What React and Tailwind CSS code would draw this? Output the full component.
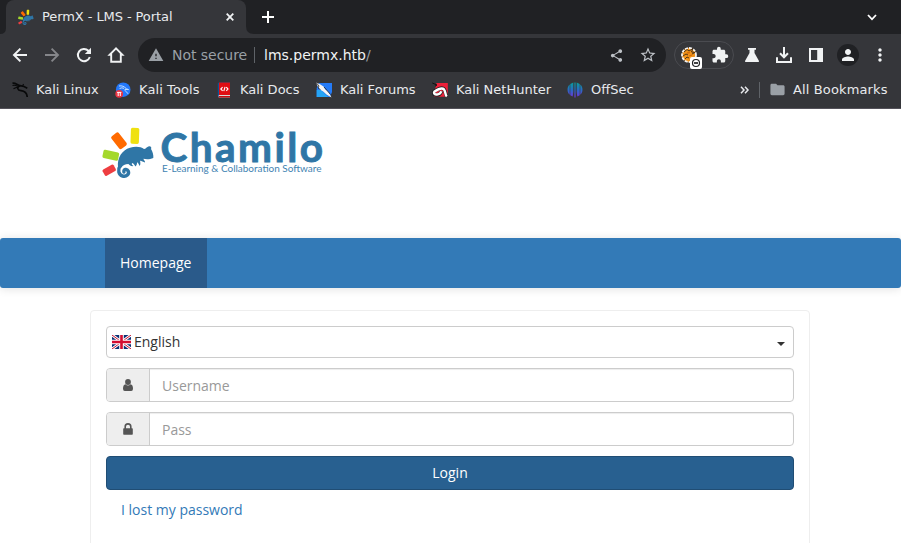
import React from "react";
import {
  MdWarning, MdShare, MdStarBorder, MdExtension, MdPerson, MdMoreVert, MdFolder,
} from "react-icons/md";

function Rays() {
  return (
    <>
      <rect x="-4.2" y="-8" width="8.4" height="16" rx="1.6" fill="#efe110" transform="translate(39.9 15.8) rotate(2)" />
      <rect x="-4.6" y="-8" width="9.2" height="16" rx="1.8" fill="#ff6a00" transform="translate(24 20.8) rotate(-38)" />
      <rect x="-4.2" y="-8" width="8.4" height="16" rx="1.6" fill="#a4d82c" transform="translate(15.8 35.2) rotate(-78)" />
      <rect x="-3.6" y="-6.3" width="7.2" height="12.6" rx="1.5" fill="#ee3e41" transform="translate(14.2 50.2) rotate(61)" />
    </>
  );
}

function Chameleon() {
  return (
    <>
      <path
        fill="#2f76a6"
        d="M23 47 C22 38 27 30 35 27.8 C40 26 46 26.5 49 29 C51 29 51.5 27 54 26.3 C55.5 26 57 27.3 56 29 C57.5 31.5 58.7 35 58.3 38 C55 39.5 51 39.5 48.5 38.8 C48.4 40 50.5 41 50 42.5 C48.4 42 46.5 40.9 45 40.7 C45.3 41.7 45.8 44 44.8 46 C43.8 44.6 43.5 43.1 42.2 42.2 C41.8 43.4 42.2 45 40.5 46.4 C39.2 44.8 38.8 43.5 37.2 43 C36.2 43.8 37 45 38.5 46 C36.5 46.6 34.6 45.4 33.4 44 C30 44 27.6 45.2 26.5 47.5 Z"
      />
      <path
        d="M25 46 C22.5 49.5 23.5 55 27.5 56 C31.5 57.2 34.6 54 33.2 51 C32 48.5 28.3 49.2 28.9 52"
        fill="none" stroke="#2f76a6" strokeWidth="3.4" strokeLinecap="round"
      />
    </>
  );
}

function ChamiloLogo() {
  return (
    <svg width="240" height="75" viewBox="0 0 240 75" className="block overflow-visible" role="img" aria-label="Chamilo">
      <Rays />
      <Chameleon />
      <text x="65.5" y="41.5" fontFamily="Lato, sans-serif" fontWeight="700" fontSize="40.5" fill="#2f76a6" stroke="#2f76a6" strokeWidth="0.9" textLength="162.5" lengthAdjust="spacing">Chamilo</text>
      <text x="67" y="52.3" fontFamily="Lato, sans-serif" fontSize="10.4" fill="#3f83b2" textLength="159.5" lengthAdjust="spacingAndGlyphs">E-Learning &amp; Collaboration Software</text>
    </svg>
  );
}

function LinuxIcon() {
  return (
    <svg width="16" height="16" viewBox="0 0 16 16" stroke="#08090a" fill="none">
      <path d="M.5 1.2 C4 1 5.5 3.2 8 3.6 L12 4.5 L15.3 6.3 M8 4 C4.3 5 5.5 8.4 9 8.7 C13 9.2 15 11.3 15.2 15" strokeWidth="1.7" />
      <path d="M.5 3.5 C3.7 2.7 5 4 7 4.5 M1.5 6.8 L5.4 5 M10.7 4 L11.5 2" strokeWidth="1.1" />
    </svg>
  );
}

function ToolsIcon() {
  return (
    <svg width="16" height="16" viewBox="0 0 16 16">
      <circle cx="8.2" cy="7.7" r="7.3" fill="#2479fb" />
      <path d="M4 4 C7 3.4 9 4.4 11.5 6.8 L13.6 7.6 L10 7.4 C8.6 8.5 11.8 9.3 13 11.8 M4.6 6.5 Q7 5.2 9 6.4" stroke="#c5e0ff" strokeWidth="1" fill="none" />
      <circle cx="4.2" cy="11.8" r="3.9" fill="#e93442" />
      <path d="M2.1 10.4 H6.4 M3.2 10.5 V14 M5.3 10.5 V14" stroke="#fff" strokeWidth="1" />
    </svg>
  );
}

function DocsIcon() {
  return (
    <svg width="16" height="16" viewBox="0 0 16 16">
      <path d="M1.8 1.2 L3 .4 H14 V13 L3 15.5 L1.8 14.5Z" fill="#0b5396" />
      <path d="M3 .5 H14 V13.2 H3Z" fill="#e00d13" />
      <path d="M2.7 13 H14 V15.5 H2.7Z" fill="#d9d9d9" />
      <path d="M3 14 H14 V15.5 H2.5Z" fill="#c50d12" />
      <path d="M6.6 5.2 L4.8 7 L6.6 8.8 M10.3 5.2 L12 7 L10.3 8.8 M9.1 4.8 L7.8 9.2" stroke="#fff" strokeWidth="1.1" fill="none" />
    </svg>
  );
}

function ForumsIcon() {
  return (
    <svg width="16" height="16" viewBox="0 0 16 16">
      <path d="M3 1 H16 V10 L14 15 H.7 V6Z" fill="#247bf8" />
      <path d="M.7 8 L5 8 L12 15 H.7Z" fill="#25a4f5" />
      <path d="M0 .6 L4 2.3 L7.5 4.6 L9.4 7.6 L12.5 10 L15.5 15.6 L10.5 12.4 L7.2 9.6 L3.5 7.3 L1.2 3.2Z" fill="#f5f5f5" />
      <path d="M0 .5 L3 4 L2 6 L4.5 7.6 M8 5 L11 8.4 L14.5 12.5" stroke="#202124" strokeWidth=".8" fill="none" />
    </svg>
  );
}

function NetHunterIcon() {
  return (
    <svg width="16" height="16" viewBox="0 0 16 16">
      <path d="M4.5 1 H15.8 V10 L14.6 14.8 H2 L3.5 5Z" fill="#ed2039" />
      <path d="M14.6 14 C13 12.6 14.1 9.7 12.2 7.3 C10 4.8 6.4 6.8 2.2 9.2 C.6 11.6 2.6 13.6 5.7 12.9 C7.8 12.4 9 11 9.2 9.3" stroke="#202124" strokeWidth="3.6" fill="none" />
      <path d="M14.8 14.4 C12.8 12.8 13.9 9.7 12 7.4 C9.6 5 6 7.2 2.6 9.4 C1.2 11.4 2.8 13 5.7 12.4 C7.8 12 8.8 10.8 9.2 9.3" stroke="#fff" strokeWidth="2.4" fill="none" />
      <path d="M.3 1 L5 3 L3 4.2" stroke="#111" strokeWidth="1" fill="none" />
    </svg>
  );
}

function OffSecIcon() {
  return (
    <svg width="16" height="16" viewBox="0 0 16 16">
      <defs>
        <linearGradient id="offsec" x1="0" y1="0" x2="0" y2="1">
          <stop offset="0" stopColor="#079e9b" />
          <stop offset=".5" stopColor="#286ac4" />
          <stop offset="1" stopColor="#7332dc" />
        </linearGradient>
      </defs>
      <path d="M2.7 2.6 V12.7 C-.2 10.3 -.2 5 2.7 2.6Z M3.3 2 L6.3 .6 V10 Q6 13 5.6 14.4 L3.3 13.2Z M7.4 .5 H8.6 V15.5 H7.4Z M9.7 .6 L12.7 2 V13.2 L10.4 14.4 Q10 13 9.7 10Z M13.3 2.6 C16.2 5 16.2 10.3 13.3 12.7Z" fill="url(#offsec)" />
    </svg>
  );
}

function FoxyIcon() {
  return (
    <span className="relative block size-4">
      <svg width="16" height="16" viewBox="0 0 16 16">
        <circle cx="8" cy="8" r="7.2" fill="#f1931b" />
        <circle cx="8" cy="8" r="7" fill="none" stroke="#f2f2f2" strokeWidth="1.8" strokeDasharray="3 1.1" />
        <path d="M3 5 L6 2.5 L8 4 L12 1.5 L10.5 5 L14 5.5 L11 7 M2 9 L5 7 L7 8 M4 12 L6 10 L8 11" stroke="#3b2917" strokeWidth=".9" fill="none" />
        <path d="M6 6 L9 5.5 M8 9 L11 8" stroke="#d66d0b" strokeWidth="1.3" />
      </svg>
      <svg width="12" height="12" viewBox="0 0 12 12" className="absolute top-[10px] left-[9px]">
        <rect width="12" height="12" rx="2" fill="#fff" />
        <circle cx="6" cy="6" r="3.5" fill="none" stroke="#202124" strokeWidth="1.2" />
        <path d="M4 6 H8" stroke="#202124" strokeWidth="1.7" />
      </svg>
    </span>
  );
}

const bookmarks = [
  { label: "Kali Linux", Icon: LinuxIcon, width: "w-[103px]" },
  { label: "Kali Tools", Icon: ToolsIcon, width: "w-[101px] tracking-[0.1px]" },
  { label: "Kali Docs", Icon: DocsIcon, width: "w-[100px]" },
  { label: "Kali Forums", Icon: ForumsIcon, width: "w-[116px]" },
  { label: "Kali NetHunter", Icon: NetHunterIcon, width: "w-[135px]" },
  { label: "OffSec", Icon: OffSecIcon, width: "w-[80px]" },
];

function TabStrip() {
  return (
    <div className="flex h-[34px] bg-[#202124]">
      <svg width="6" height="34" viewBox="0 0 6 34" className="shrink-0"><path d="M6 28 V34 H0 Q6 34 6 28Z" fill="#35363a" /></svg>
      <div className="flex w-[240px] shrink-0 items-center rounded-t-lg bg-[#35363a] pl-3">
        <svg width="16" height="16" viewBox="7 5 53 53" className="shrink-0"><Rays /><Chameleon /></svg>
        <span className="ml-2 w-[178px] text-[13px] leading-4 tracking-[-0.08px] whitespace-nowrap text-[#e8eaed]">PermX - LMS - Portal</span>
        <svg width="8" height="8" viewBox="0 0 8 8" className="ml-[6px] shrink-0"><path d="M.7 .7 L7.3 7.3 M7.3 .7 L.7 7.3" stroke="#f1f3f4" strokeWidth="1.8" /></svg>
      </div>
      <svg width="8" height="34" viewBox="0 0 8 34" className="shrink-0"><path d="M0 26 V34 H8 Q0 34 0 26Z" fill="#35363a" /></svg>
      <div className="flex w-7 items-center justify-center text-white">
        <svg width="12" height="12" viewBox="0 0 12 12"><path d="M6 0 V12 M0 6 H12" stroke="currentColor" strokeWidth="2" /></svg>
      </div>
      <div className="ml-auto flex w-[38px] items-center pl-[4px] text-white">
        <svg width="10" height="7" viewBox="0 0 10 7"><path d="M1 1 L5 5.3 L9 1" stroke="currentColor" strokeWidth="1.8" fill="none" /></svg>
      </div>
    </div>
  );
}

function Toolbar() {
  return (
    <div className="flex h-[42px] items-center bg-[#35363a] text-[#f1f3f4]">
      <div className="flex w-[138px] gap-[12px] pl-[10px]">
        <svg width="20" height="20" viewBox="0 0 20 20" className="shrink-0"><path d="M17 10 H4.5 M10.4 3.6 L4 10 L10.4 16.4" fill="none" stroke="currentColor" strokeWidth="2" /></svg>
        <svg width="20" height="20" viewBox="0 0 20 20" className="shrink-0 text-[#85868a]"><path d="M3 10 H15.5 M9.6 3.6 L16 10 L9.6 16.4" fill="none" stroke="currentColor" strokeWidth="1.9" /></svg>
        <svg width="20" height="20" viewBox="0 0 20 20" className="shrink-0">
          <path d="M15.8 12 A6.1 6.1 0 1 1 14.4 5.8 L16 7.6" fill="none" stroke="currentColor" strokeWidth="2" />
          <path d="M17 2.8 V9 H10.8Z" fill="currentColor" />
        </svg>
        <svg width="20" height="20" viewBox="0 0 20 20" className="shrink-0"><path d="M10 3.3 L3.6 9.8 H5.2 V16.8 H14.8 V9.8 H16.4 Z" fill="none" stroke="currentColor" strokeWidth="1.9" /></svg>
      </div>
      <div className="flex h-[34px] w-[528px] items-center rounded-full bg-[#202124] pl-[10px]">
        <MdWarning size={16} className="shrink-0 text-[#9aa0a6]" />
        <span className="ml-2 w-[82px] text-[14px] tracking-[-0.04px] whitespace-nowrap text-[#9aa0a6]">Not secure</span>
        <span className="h-4 w-px bg-[#5f6368]" />
        <span className="ml-[9px] text-[14px] whitespace-nowrap text-[#f1f3f4]">lms.permx.htb<span className="text-[#9aa0a6]">/</span></span>
        <MdShare size={15} className="mr-[15px] ml-auto shrink-0 text-[#bdc1c6]" />
        <MdStarBorder size={18} className="mr-[9px] shrink-0 text-[#bdc1c6]" />
      </div>
      <div className="ml-2 flex h-7 w-[60px] items-center rounded-full border border-[#4a4b50] pl-[6px]">
        <FoxyIcon />
        <MdExtension size={18} className="ml-[14px]" />
      </div>
      <svg width="16" height="16" viewBox="0 0 16 16" className="ml-[10px]"><path d="M4 1 H12 V2.7 H10.5 V6 L15 14 Q15.3 15 14.2 15 H1.8 Q.7 15 1 14 L5.5 6 V2.7 H4Z" fill="currentColor" /></svg>
      <svg width="18" height="18" viewBox="0 0 18 18" className="ml-[15px]"><path d="M9 1 V11 M5 7.3 L9 11.3 L13 7.3 M2 11.3 V16 H16 V11.3" fill="none" stroke="currentColor" strokeWidth="2" /></svg>
      <svg width="16" height="16" viewBox="0 0 16 16" className="ml-[15px]"><path d="M1 1 H15 V15 H1Z M3 3 V13 H9.2 V3Z" fill="currentColor" fillRule="evenodd" /></svg>
      <span className="ml-[13px] flex size-[22px] items-center justify-center rounded-full bg-[#202124]"><MdPerson size={18} /></span>
      <MdMoreVert size={20} className="ml-[11px]" />
    </div>
  );
}

function BookmarksBar() {
  return (
    <div className="flex h-[33px] items-center border-b border-[#54525a] bg-[#35363a] pb-[5px] pl-3 text-[13px] text-[#e8eaed]">
      {bookmarks.map(({ label, Icon, width }) => (
        <div key={label} className={"flex shrink-0 items-center gap-2 whitespace-nowrap " + width}>
          <Icon />
          <span>{label}</span>
        </div>
      ))}
      <svg width="10" height="8" viewBox="0 0 10 8" className="ml-[93px]"><path d="M1 .8 L4 4 L1 7.2 M5 .8 L8 4 L5 7.2" fill="none" stroke="currentColor" strokeWidth="1.5" /></svg>
      <span className="ml-[9px] h-4 w-px bg-[#5f6368]" />
      <MdFolder size={17} className="ml-[9px] text-[#9aa0a6]" />
      <span className="ml-[7px] tracking-[0.13px] whitespace-nowrap">All Bookmarks</span>
    </div>
  );
}

function UnionJack() {
  return (
    <svg width="19" height="14" viewBox="0 0 19 14" className="shrink-0">
      <path fill="#0b2f73" d="M0 0H19V14H0Z" />
      <path d="M0 0 L19 14 M19 0 L0 14" stroke="#fff" strokeWidth="2.8" />
      <path d="M0 0 L19 14 M19 0 L0 14" stroke="#c8102e" strokeWidth="1" />
      <path d="M9.5 0 V14 M0 7 H19" stroke="#fff" strokeWidth="4.6" />
      <path d="M9.5 0 V14 M0 7 H19" stroke="#d30d30" strokeWidth="2.6" />
    </svg>
  );
}

function Field({ label, children }) {
  return (
    <div className="mt-[10px] flex h-[34px] overflow-hidden rounded border border-[#ccc] bg-white shadow-[inset_0_1px_1px_rgba(0,0,0,0.075)]">
      <div className="flex w-[43px] shrink-0 items-center justify-center border-r border-[#ccc] bg-[#eee]">{children}</div>
      <span className="pl-3 leading-[34px] text-[#999]">{label}</span>
    </div>
  );
}

export default function App() {
  return (
    <div className="h-[543px] overflow-hidden bg-white">
      <div className="font-['DejaVu_Sans',sans-serif]">
        <TabStrip />
        <Toolbar />
        <BookmarksBar />
      </div>
      <div className="font-['Open_Sans','Noto_Sans',sans-serif] text-[14px] leading-5">
        <header className="h-[129px] pt-[11px] pl-[95px]"><ChamiloLogo /></header>
        <nav className="flex h-[50px] rounded-[3px] bg-[#337ab7] pl-[105px] shadow-[0_1px_10px_rgba(0,0,0,0.12)]">
          <a className="flex w-[102px] items-center bg-[#2a5a8a] pl-[15px] text-white">Homepage</a>
        </nav>
        <main className="mt-[22px] ml-[90px] h-[260px] w-[720px] rounded border border-[#eee] p-[15px]">
          <div className="flex h-8 items-center rounded border border-[#ccc] pl-[5px] text-[#333]">
            <UnionJack />
            <span className="ml-[3px]">English</span>
            <svg width="8" height="4" viewBox="0 0 8 4" className="mt-[3px] mr-2 ml-auto"><path d="M0 0 H8 L4 4Z" fill="#333" /></svg>
          </div>
          <Field label="Username">
            <svg width="10" height="12" viewBox="0 0 10 12"><ellipse cx="5" cy="3" rx="2.9" ry="3" fill="#555" /><path d="M2.5 5.2 Q5 7.7 7.5 5.2 Q10 5.5 10 9.7 Q10 12 8.2 12 H1.8 Q0 12 0 9.7 Q0 5.5 2.5 5.2Z" fill="#555" /></svg>
          </Field>
          <Field label="Pass">
            <svg width="10" height="12" viewBox="0 0 10 12"><path d="M2.2 6 V3.7 Q2.2 .9 5 .9 Q7.8 .9 7.8 3.7 V6" fill="none" stroke="#555" strokeWidth="1.6" /><rect x=".2" y="5.2" width="9.6" height="6.6" rx=".7" fill="#555" /></svg>
          </Field>
          <button className="mt-[10px] flex h-[34px] w-full items-center justify-center rounded border border-[#204d74] bg-[#286090] text-white">Login</button>
          <a className="mt-[10px] ml-[15px] block text-[#337ab7]">I lost my password</a>
        </main>
      </div>
    </div>
  );
}
